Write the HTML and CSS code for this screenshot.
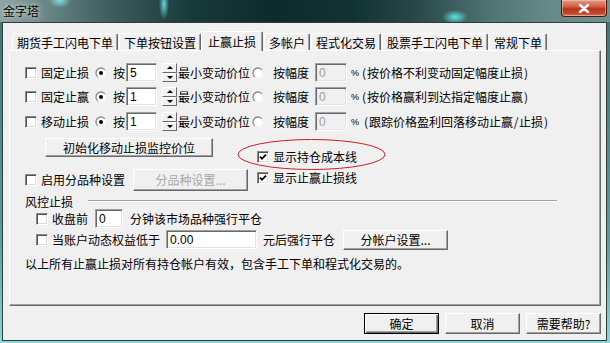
FILE: index.html
```html
<!DOCTYPE html>
<html lang="zh">
<head>
<meta charset="utf-8">
<title>金字塔</title>
<link rel="stylesheet" href="styles.css">
</head>
<body>
<svg class="defs" width="0" height="0" aria-hidden="true">
  <defs>
    <linearGradient id="ring" x1="0" y1="0" x2="1" y2="1">
      <stop offset="0" stop-color="#7a7a7a"/>
      <stop offset="0.5" stop-color="#9a9a9a"/>
      <stop offset="0.55" stop-color="#e8e8e8"/>
      <stop offset="1" stop-color="#ffffff"/>
    </linearGradient>
  </defs>
</svg>
<div class="window">
  <div class="titlebar">
    <span class="title">金字塔</span>
    <div class="close">
      <svg width="12" height="9" viewBox="0 0 12 9"><path d="M2 1 L10 8 M10 1 L2 8" stroke="#fff" stroke-width="2.4" stroke-linecap="round"/></svg>
    </div>
  </div>
  <div class="client">
    <div class="tabs">
      <div class="tab">期货手工闪电下单</div>
      <div class="tab">下单按钮设置</div>
      <div class="tab active">止赢止损</div>
      <div class="tab">多帐户</div>
      <div class="tab">程式化交易</div>
      <div class="tab">股票手工闪电下单</div>
      <div class="tab">常规下单</div>
    </div>
    <div class="panel">
      <div class="row">
        <span class="cb"></span><span class="lbl">固定止损</span>
        <svg class="rd" viewBox="0 0 12 12"><circle cx="6" cy="6" r="5" fill="#fff" stroke="url(#ring)" stroke-width="1.3"/><circle cx="6" cy="6" r="2" fill="#000"/></svg>
        <span class="an">按</span>
        <span class="inp">5</span>
        <span class="spin"><i class="up"></i><i class="dn"></i></span>
        <span class="min">最小变动价位</span>
        <svg class="rd rd2" viewBox="0 0 12 12"><circle cx="6" cy="6" r="5" fill="#fff" stroke="url(#ring)" stroke-width="1.3"/></svg>
        <span class="fd">按幅度</span>
        <span class="inp dis">0</span>
        <span class="pct">%</span>
        <span class="note"><span class="p">(</span>按价格不利变动固定幅度止损<span class="p">)</span></span>
      </div>
      <div class="row r2">
        <span class="cb"></span><span class="lbl">固定止赢</span>
        <svg class="rd" viewBox="0 0 12 12"><circle cx="6" cy="6" r="5" fill="#fff" stroke="url(#ring)" stroke-width="1.3"/><circle cx="6" cy="6" r="2" fill="#000"/></svg>
        <span class="an">按</span>
        <span class="inp">1</span>
        <span class="spin"><i class="up"></i><i class="dn"></i></span>
        <span class="min">最小变动价位</span>
        <svg class="rd rd2" viewBox="0 0 12 12"><circle cx="6" cy="6" r="5" fill="#fff" stroke="url(#ring)" stroke-width="1.3"/></svg>
        <span class="fd">按幅度</span>
        <span class="inp dis">0</span>
        <span class="pct">%</span>
        <span class="note"><span class="p">(</span>按价格赢利到达指定幅度止赢<span class="p">)</span></span>
      </div>
      <div class="row r3">
        <span class="cb"></span><span class="lbl">移动止损</span>
        <svg class="rd" viewBox="0 0 12 12"><circle cx="6" cy="6" r="5" fill="#fff" stroke="url(#ring)" stroke-width="1.3"/><circle cx="6" cy="6" r="2" fill="#000"/></svg>
        <span class="an">按</span>
        <span class="inp">1</span>
        <span class="spin"><i class="up"></i><i class="dn"></i></span>
        <span class="min">最小变动价位</span>
        <svg class="rd rd2" viewBox="0 0 12 12"><circle cx="6" cy="6" r="5" fill="#fff" stroke="url(#ring)" stroke-width="1.3"/></svg>
        <span class="fd">按幅度</span>
        <span class="inp dis">0</span>
        <span class="pct">%</span>
        <span class="note note3"><span class="p">(</span>跟踪价格盈利回落移动止赢<span class="p">/</span>止损<span class="p">)</span></span>
      </div>

      <div class="mid">
        <div class="btn btn-init">初始化移动止损监控价位</div>
        <label class="chk chk-a"><span class="cb on"><svg viewBox="0 0 8 8"><path d="M1 3.6 L3 5.8 L7 1.6" fill="none" stroke="#000" stroke-width="1.8"/></svg></span><span class="lbl">显示持仓成本线</span></label>
        <div class="sub">
          <span class="cb"></span><span class="lbl">启用分品种设置</span>
          <div class="btn btn-sub disabled">分品种设置...</div>
        </div>
        <label class="chk chk-b"><span class="cb on"><svg viewBox="0 0 8 8"><path d="M1 3.6 L3 5.8 L7 1.6" fill="none" stroke="#000" stroke-width="1.8"/></svg></span><span class="lbl">显示止赢止损线</span></label>
      </div>

      <div class="group">
        <span>风控止损</span><span class="etch"></span>
      </div>
      <div class="row risk1">
        <span class="cb"></span><span class="lbl">收盘前</span>
        <span class="inp inp-min">0</span>
        <span class="after">分钟该市场品种强行平仓</span>
      </div>
      <div class="row risk2">
        <span class="cb"></span><span class="lbl">当账户动态权益低于</span>
        <span class="inp inp-eq">0.00</span>
        <span class="after2">元后强行平仓</span>
        <div class="btn btn-acc">分帐户设置...</div>
      </div>
      <p class="foot-note">以上所有止赢止损对所有持仓帐户有效，包含手工下单和程式化交易的。</p>
    </div>
    <div class="footer">
      <div class="btn btn-bottom default">确定</div>
      <div class="btn btn-bottom">取消</div>
      <div class="btn btn-bottom">需要帮助?</div>
    </div>
  </div>
  <svg class="mark" width="152" height="36" viewBox="0 0 152 36"><ellipse cx="75.5" cy="17.5" rx="73.5" ry="15" fill="none" stroke="#c8202a" stroke-width="1"/></svg>
</div>
</body>
</html>
```

FILE: styles.css
```css
* { box-sizing: border-box; }
html, body { margin: 0; padding: 0; }
body {
  font: 12px/12px "Noto Sans CJK SC", "Noto Sans", sans-serif;
  color: #000;
  background: #fff;
}
.defs { position: absolute; }

.window {
  width: 610px;
  height: 343px;
  display: flex;
  flex-direction: column;
  position: relative;
  overflow: hidden;
  background: linear-gradient(#44706e, #5d9c9b 70%, #8fd6d6);
}

.titlebar {
  height: 22px;
  flex: none;
  display: flex;
  justify-content: space-between;
  align-items: flex-start;
  background:
    radial-gradient(ellipse 11px 8px at 60px 0px, rgba(130,235,235,.95), rgba(130,235,235,0)),
    radial-gradient(ellipse 5px 16px at 164px 4px, rgba(100,225,225,.95), rgba(100,225,225,0)),
    radial-gradient(ellipse 13px 7px at 455px 17px, rgba(95,235,235,.95), rgba(95,235,235,0)),
    linear-gradient(90deg, #8ea4a2 0, #6c8987 7%, #456564 16%, #2d4d4c 24%, #17393a 32%, #0e2b2c 45%, #123333 58%, #274847 68%, #4f7371 80%, #678a88 90%, #6f918f 100%);
}
.title {
  margin: 4px 0 0 3px;
  line-height: 13px;
  color: #000;
  text-shadow: 0 0 4px rgba(255,255,255,.7), 0 0 8px rgba(255,255,255,.5);
}
.close {
  width: 46px;
  height: 17px;
  margin-right: 3px;
  border: 1px solid #4a1a10;
  border-top: none;
  border-radius: 0 0 4px 4px;
  background: linear-gradient(#e29a86, #d0624a 40%, #b8341c 55%, #c44a2c 85%, #d67a5c);
  box-shadow: inset 0 0 0 1px rgba(255,220,210,.45);
  display: flex;
  align-items: center;
  justify-content: center;
}

.client {
  flex: 1;
  margin: 0 3px 2px 2px;
  border: 1px solid #2e3f3f;
  background: #f0f0f0;
  display: flex;
  flex-direction: column;
}

.tabs {
  height: 27px;
  flex: none;
  margin-left: 6px;
  padding-left: 3px;
  display: flex;
  align-items: flex-end;
  position: relative;
  z-index: 1;
}
.tab {
  height: 17px;
  padding: 1px 4px 0;
  line-height: 15px;
  white-space: nowrap;
  border: 1px solid;
  border-bottom: none;
  border-color: #fff #696969 #696969 #fff;
  border-radius: 2px 2px 0 0;
  box-shadow: inset -1px 0 #a0a0a0;
  margin-right: 1px;
}
.tab.active {
  height: 20px;
  padding: 2px 6px 0;
  margin: 0 1px -1px -1px;
  background: #f0f0f0;
}

.panel {
  height: 256px;
  flex: none;
  margin: 0 5px 0 6px;
  border: 1px solid;
  border-color: #fff #696969 #696969 #fff;
  box-shadow: inset -1px -1px #a0a0a0;
  padding: 12px 0 0 15px;
}

.row {
  display: flex;
  align-items: center;
  height: 19px;
  white-space: nowrap;
}
.r2 { margin-top: 5px; }
.r3 { margin-top: 6px; }

.cb {
  width: 12px;
  height: 12px;
  flex: none;
  background: #fff;
  border: 1px solid;
  border-color: #8a8a8a #fff #fff #8a8a8a;
  box-shadow: inset 1px 1px #505050, inset -1px -1px #dcdcdc;
  display: flex;
  align-items: center;
  justify-content: center;
}
.cb svg { width: 8px; height: 8px; }
.lbl { margin-left: 4px; }

.rd { width: 12px; height: 12px; flex: none; margin-left: 6px; }
.rd2 { margin-left: 2px; }
.an { margin-left: 6px; }

.inp {
  height: 19px;
  width: 31px;
  flex: none;
  margin-left: 1px;
  background: #fff;
  border: 1px solid;
  border-color: #a0a0a0 #fff #fff #a0a0a0;
  box-shadow: inset 1px 1px #696969, inset -1px -1px #e3e3e3;
  padding: 3px 0 0 3px;
  line-height: 12px;
  font-family: "Liberation Sans", sans-serif;
  font-size: 12px;
}
.inp.dis {
  background: #f0f0f0;
  color: #a0a0a0;
  width: 32px;
  margin-left: 6px;
}
.spin {
  width: 15px;
  height: 19px;
  flex: none;
  margin-left: 5px;
  display: flex;
  flex-direction: column;
}
.spin i {
  flex: 1;
  border: 1px solid;
  border-color: #fff #696969 #696969 #fff;
  background: #f0f0f0;
  display: flex;
  align-items: center;
  justify-content: center;
}
.spin i::after {
  content: "";
  width: 0;
  height: 0;
  border-left: 3px solid transparent;
  border-right: 3px solid transparent;
}
.spin .up::after { border-bottom: 3px solid #000; }
.spin .dn::after { border-top: 3px solid #000; }
.min { margin-left: 1px; }
.fd { margin-left: 9px; }
.pct {
  margin-left: 4px;
  width: 8px;
  flex: none;
  font-family: "Liberation Sans", sans-serif;
  font-size: 9px;
}
.note { margin-left: 2px; }
.note3 { margin-left: 4px; }
.p {
  display: inline-block;
  width: 6px;
  text-align: center;
}

.btn {
  background: #f0f0f0;
  border: 1px solid;
  border-color: #fff #696969 #696969 #fff;
  box-shadow: inset -1px -1px #a0a0a0;
  display: flex;
  align-items: center;
  justify-content: center;
  white-space: nowrap;
  flex: none;
}
.btn.disabled { color: #a8a8a8; }

.mid {
  margin-top: 7px;
  display: grid;
  grid-template-columns: 232px auto;
  grid-template-rows: 25px 24px;
  row-gap: 5px;
}
.btn-init {
  width: 168px;
  height: 19px;
  margin-left: 20px;
  align-self: start;
}
.chk {
  display: flex;
  align-items: center;
  line-height: 12px;
  white-space: nowrap;
}
.chk-a { align-self: end; }
.chk-b { align-self: start; margin-top: 4px; }
.sub {
  display: flex;
  align-items: center;
  white-space: nowrap;
}
.btn-sub {
  width: 115px;
  height: 22px;
  margin-left: 8px;
}

.group {
  margin-top: 4px;
  display: flex;
  align-items: center;
  height: 12px;
  line-height: 12px;
}
.etch {
  width: 469px;
  margin: -3px 0 0 15px;
  border-top: 1px solid #a0a0a0;
  border-bottom: 1px solid #fff;
}

.risk1 { margin-top: 1px; }
.risk1 .cb, .risk2 .cb { margin-left: 11px; }
.inp-min { width: 28px; margin-left: 7px; }
.after { margin-left: 7px; }
.risk2 { margin-top: 1px; height: 21px; }
.inp-eq { width: 91px; margin-left: 6px; }
.after2 { margin-left: 6px; }
.btn-acc {
  width: 105px;
  height: 20px;
  margin-left: 8px;
}

.foot-note {
  margin: 8px 0 0;
  line-height: 12px;
  white-space: nowrap;
}

.footer {
  margin-top: 7px;
  padding-right: 5px;
  display: flex;
  justify-content: flex-end;
  gap: 6px;
}
.btn-bottom {
  width: 75px;
  height: 21px;
}
.btn-bottom.default {
  border: 1px solid #000;
  box-shadow: inset 1px 1px #fff, inset -1px -1px #696969, inset -2px -2px #a0a0a0;
}

.mark {
  position: absolute;
  left: 236px;
  top: 137px;
}
```
